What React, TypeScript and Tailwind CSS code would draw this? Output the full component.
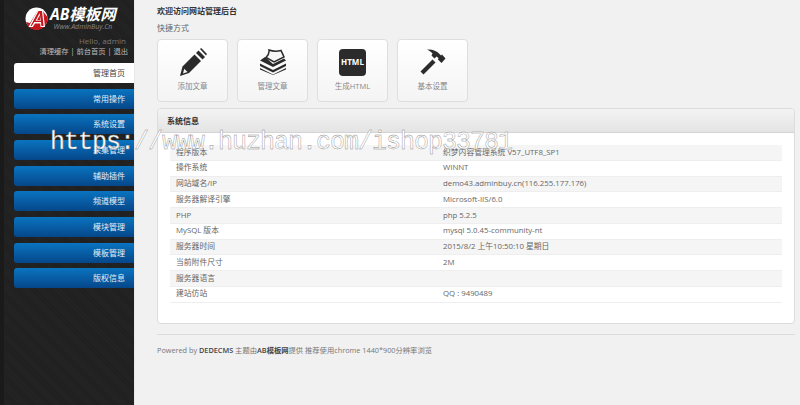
import React from 'react';

const menu = ['常用操作', '系统设置', '采集管理', '辅助插件', '频道模型', '模块管理', '模板管理', '版权信息'];

const rows: [string, string][] = [
  ['程序版本', '织梦内容管理系统 V57_UTF8_SP1'],
  ['操作系统', 'WINNT'],
  ['网站域名/IP', 'demo43.adminbuy.cn(116.255.177.176)'],
  ['服务器解译引擎', 'Microsoft-IIS/6.0'],
  ['PHP', 'php 5.2.5'],
  ['MySQL 版本', 'mysql 5.0.45-community-nt'],
  ['服务器时间', '2015/8/2 上午10:50:10 星期日'],
  ['当前附件尺寸', '2M'],
  ['服务器语言', ''],
  ['建站仿站', 'QQ : 9490489'],
];

function PencilIcon() {
  return (
    <svg width="28" height="28" viewBox="0 0 28 28">
      <path d="M1 28 L3.5 18.5 L15.5 6.5 L22 13 L10 25 Z" fill="#2b2b2b" />
      <path d="M4 25.5 L5.2 20.8 L8.5 24 Z" fill="#f7f7f7" />
      <path d="M17 5 L19.5 2.5 L26 9 L23.5 11.5 Z" fill="#2b2b2b" />
      <path d="M21 1 L22.2 0 L28 6 L27 7.5 Z" fill="#2b2b2b" />
    </svg>
  );
}

function StackIcon() {
  return (
    <svg width="28" height="26" viewBox="0 0 28 26" fill="none">
      <path d="M10 1 C14 2.5 18 2.5 22 1.5 L25 8 L15 13 L7 8.5 C9 6.5 10.5 4 10 1 Z" fill="#f7f7f7" stroke="#2b2b2b" strokeWidth="1.5" />
      <path d="M6 8 L1 11.5 L14 18 L27 11.5 L25 9.5 L14 15 Z" fill="#2b2b2b" />
      <path d="M1 14.5 L14 21 L27 14.5 L27 17 L14 23.5 L1 17 Z" fill="#2b2b2b" />
      <path d="M1 19 L14 25.5 L27 19 L27 20.5 L14 26 L1 20.5 Z" fill="#2b2b2b" />
    </svg>
  );
}

function HammerIcon() {
  return (
    <svg width="26" height="26" viewBox="0 0 26 26">
      <path d="M0.5 22.5 L12.5 10.5 L15.5 13.5 L3.5 25.5 Z" fill="#2b2b2b" />
      <path d="M7 0.5 C12 0 16.5 1.5 19.5 5 L21 6.5 L22 5.5 L25.5 9.5 L21.5 14 L18 10.5 L18.5 9 L16.5 7.5 L14.5 9.5 L11.5 6.5 L12.5 4.5 C11 2.8 9 1.5 7 0.5 Z" fill="#2b2b2b" />
    </svg>
  );
}

function HtmlIcon() {
  return (
    <div className="flex h-[27px] w-[27px] items-center justify-center rounded-[4px] bg-[#2b2b2b] text-[8px] font-bold text-white">
      HTML
    </div>
  );
}

function Shortcut({ label, icon }: { label: string; icon: React.ReactNode }) {
  return (
    <div className="flex h-[63px] w-[71px] flex-col items-center rounded-[4px] border border-[#dedede] bg-gradient-to-b from-[#ffffff] to-[#f4f4f4] pt-[8px]">
      <div className="flex h-[28px] items-center justify-center">{icon}</div>
      <div className="mt-[4px] text-[7.5px] leading-[12px] text-[#888]">{label}</div>
    </div>
  );
}

export default function App() {
  return (
    <div className="relative flex h-[405px] w-[800px] overflow-hidden bg-[#f1f1f1] font-['Open_Sans','Noto_Sans_CJK_SC',sans-serif] text-[7.8px] text-[#555]">
      {/* Sidebar */}
      <aside className="h-full w-[135px] shrink-0 border-r border-[#e8e8e8] border-l-[4px] border-l-[#1a1a1a] bg-[#212121] bg-[repeating-linear-gradient(45deg,#242424_0px,#242424_1px,#1f1f1f_1px,#1f1f1f_2px)]">
        <div className="flex h-[34px] items-center pl-[21px] pt-[3px]">
          <svg width="23" height="23" viewBox="0 0 23 23" className="shrink-0">
            <circle cx="11.5" cy="11.5" r="11" fill="#ffffff" />
            <path d="M1 15 A11 11 0 0 0 22.4 10 L17 3 L13 3 L5 16 Z" fill="#c5161d" />
            <path d="M13 2.5 L18 2.5 L20 20 L15.5 20 L15.2 16.5 L10 16.5 L7.8 20 L3.5 20 Z M14.8 8 L12 13.2 L15 13.2 Z" fill="#ffffff" />
            <path d="M13.5 4 L17 4 L18.6 19 L16.4 19 L16 15 L9.2 15 L6.8 19 L5.5 19 Z M14.6 6 L10.6 13.8 L15.8 13.8 Z" fill="#c5161d" />
          </svg>
          <div className="ml-[2px] flex flex-col items-center">
            <div className="text-[15.5px] font-bold italic leading-[16px] text-white">AB模板网</div>
            <div className="mt-[1px] text-[7px] italic leading-[8px] text-[#888]">Www.AdminBuy.Cn</div>
          </div>
        </div>
        <div className="mt-[1px] pr-[8px] text-right text-[8px] leading-[11px] text-[#777]">Hello, admin</div>
        <div className="pr-[6px] text-right text-[7.3px] leading-[11px] text-[#bbb]">清理缓存 | 前台首页 | 退出</div>
        <div className="mt-[6px] ml-[10px] flex h-[20px] items-center justify-end rounded-l-[3px] bg-white pr-[9px] text-[8px] text-[#444]">管理首页</div>
        <div className="mt-[5.5px] ml-[10px] flex flex-col gap-[5.7px]">
          {menu.map(item => (
            <div
              key={item}
              className="flex h-[20px] items-center justify-end rounded-l-[3px] bg-gradient-to-b from-[#0a74c0] to-[#06478a] pr-[9px] text-[8px] text-[#e6eef6]"
            >
              {item}
            </div>
          ))}
        </div>
      </aside>

      {/* Main */}
      <main className="flex-1 pl-[22px] pr-[5px]">
        <div className="pt-[4px] text-[8px] font-semibold leading-[13px] text-[#333]">欢迎访问网站管理后台</div>
        <div className="mt-[4px] text-[8px] leading-[13px] text-[#666]">快捷方式</div>
        <div className="mt-[5px] flex gap-[9px]">
          <Shortcut label="添加文章" icon={<PencilIcon />} />
          <Shortcut label="管理文章" icon={<StackIcon />} />
          <Shortcut label="生成HTML" icon={<HtmlIcon />} />
          <Shortcut label="基本设置" icon={<HammerIcon />} />
        </div>

        <section className="mt-[6px] h-[216px] w-[638px] overflow-hidden rounded-[4px] border border-[#dcdcdc] bg-white">
          <div className="flex h-[24px] items-center border-b border-[#d4d4d4] bg-gradient-to-b from-[#f3f3f3] to-[#e4e4e4] pl-[9px] text-[8px] font-semibold text-[#333]">
            系统信息
          </div>
          <div className="mx-[12px] mt-[12px]">
            {rows.map(([name, value], i) => (
              <div
                key={name}
                className={`flex h-[15.75px] items-center border-b border-[#eeeeee] pl-[6px] text-[#666] ${i % 2 === 0 ? 'bg-[#f5f5f5]' : 'bg-white'}`}
              >
                <span className="w-[267px] shrink-0">{name}</span>
                <span>{value}</span>
              </div>
            ))}
          </div>
        </section>

        <div className="mt-[10px] border-t border-[#dcdcdc] pt-[9px] text-[7.3px] leading-[12px] text-[#777]">
          Powered by <span className="font-semibold text-[#444]">DEDECMS</span> 主题由<span className="font-semibold text-[#444]">AB模板网</span>提供 推荐使用chrome 1440*900分辨率浏览
        </div>
      </main>

      {/* Watermark */}
      <div className="pointer-events-none absolute left-[50px] top-[128px] whitespace-nowrap font-['Liberation_Mono',monospace] text-[25px] leading-[30px] tracking-[-1px] text-white [-webkit-text-stroke:0.4px_#8a8a8a]">
        https://www.huzhan.com/ishop33781
      </div>
    </div>
  );
}
